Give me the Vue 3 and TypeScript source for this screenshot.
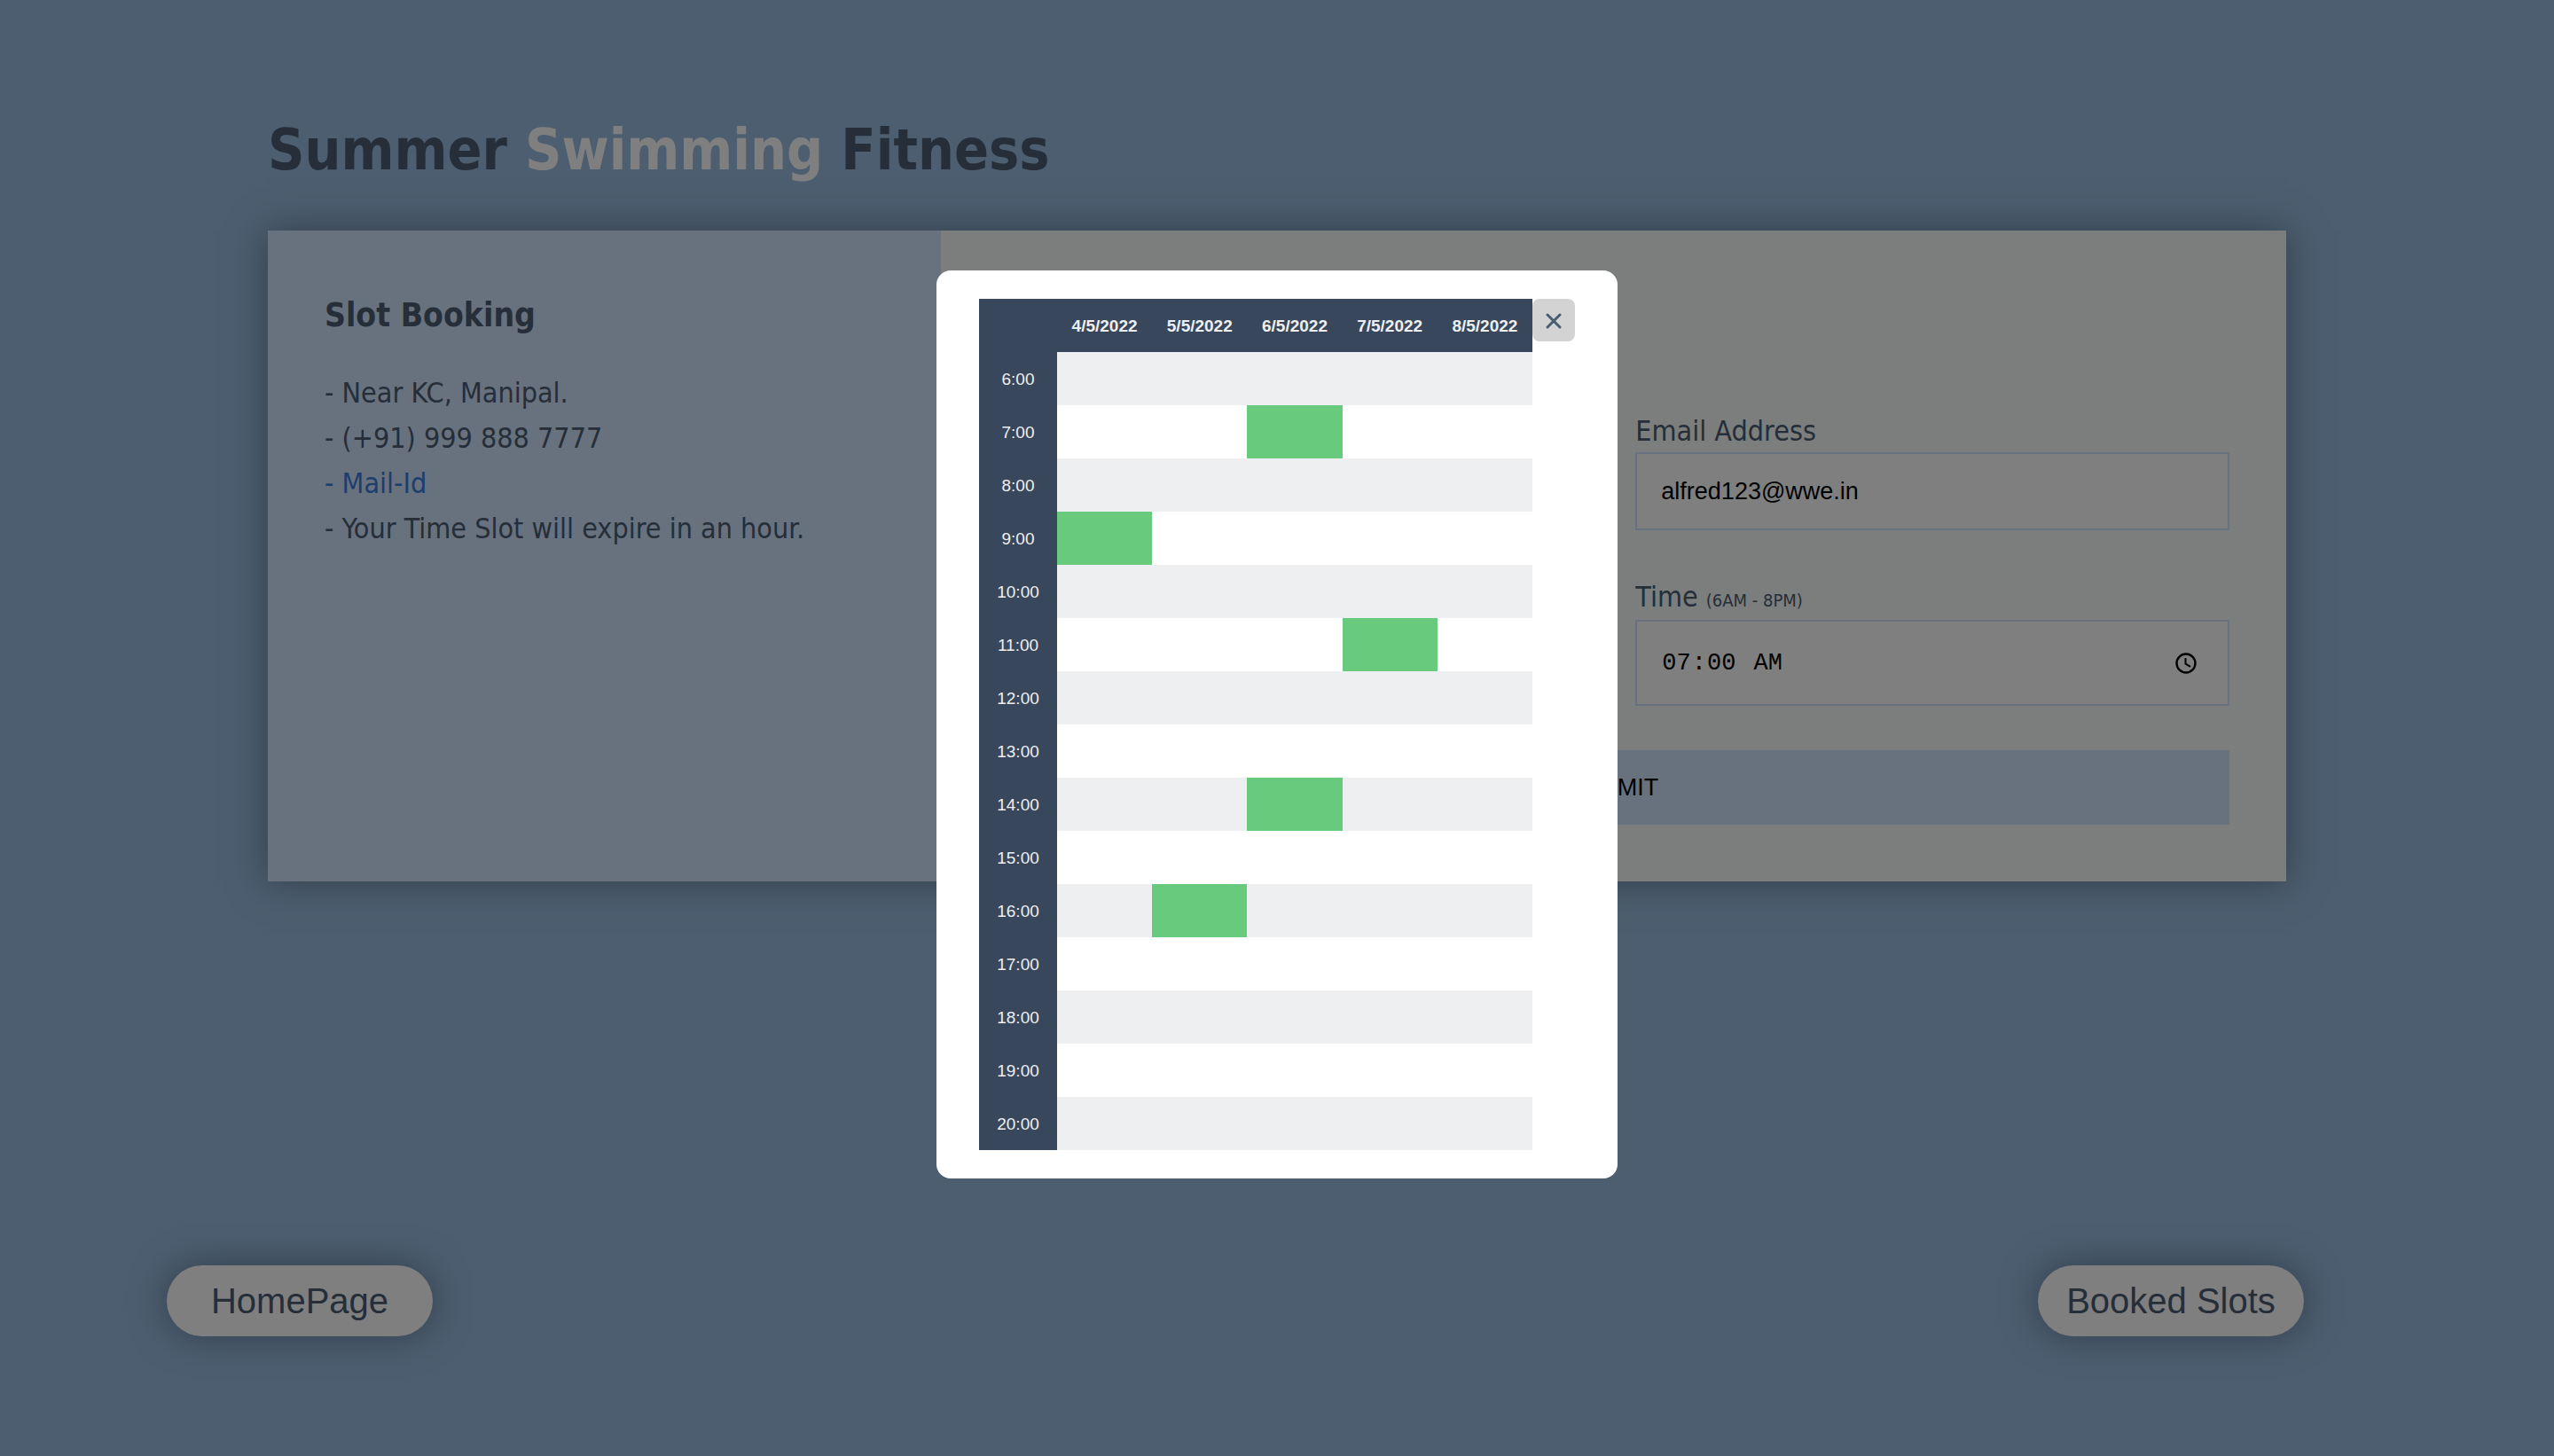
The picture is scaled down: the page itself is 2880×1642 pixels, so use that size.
<script setup lang="ts">
import { ref } from 'vue'

const days: string[] = ['4/5/2022', '5/5/2022', '6/5/2022', '7/5/2022', '8/5/2022']
const hours: string[] = Array.from({ length: 15 }, (_, i) => `${i + 6}:00`)

const booked = new Set<string>([
  '6/5/2022 7:00',
  '4/5/2022 9:00',
  '7/5/2022 11:00',
  '6/5/2022 14:00',
  '5/5/2022 16:00',
])

const email = ref('alfred123@wwe.in')
const time = ref('07:00')
const showSlots = ref(true)

const isBooked = (day: string, hour: string): boolean => booked.has(`${day} ${hour}`)
</script>

<template>
  <div class="page">
    <main class="container">
      <h1 class="brand">Summer <span>Swimming</span> Fitness</h1>

      <div class="wrapper">
        <section class="info">
          <h3>Slot Booking</h3>
          <ul>
            <li>- Near KC, Manipal.</li>
            <li>- (+91) 999 888 7777</li>
            <li><a href="#mail">- Mail-Id</a></li>
            <li>- Your Time Slot will expire in an hour.</li>
          </ul>
        </section>

        <section class="booking">
          <form @submit.prevent>
            <p class="field">
              <label for="email">Email Address</label>
              <input id="email" v-model="email" type="email" />
            </p>
            <p class="field">
              <label for="time">Time <small>(6AM - 8PM)</small></label>
              <input id="time" v-model="time" type="time" min="06:00" max="20:00" />
            </p>
            <button class="submit" type="submit">SUBMIT</button>
          </form>
        </section>
      </div>
    </main>

    <nav class="actions">
      <button type="button" class="pill">HomePage</button>
      <button type="button" class="pill" @click="showSlots = true">Booked Slots</button>
    </nav>

    <div v-if="showSlots" class="overlay">
      <div class="modal" role="dialog" aria-modal="true">
        <table>
          <thead>
            <tr>
              <th class="hour"></th>
              <th v-for="day in days" :key="day" scope="col">{{ day }}</th>
            </tr>
          </thead>
          <tbody>
            <tr v-for="hour in hours" :key="hour">
              <th class="hour" scope="row">{{ hour }}</th>
              <td v-for="day in days" :key="day" :class="{ booked: isBooked(day, hour) }"></td>
            </tr>
          </tbody>
        </table>
        <button type="button" class="close" aria-label="Close" @click="showSlots = false">
          <svg viewBox="0 0 20 20" width="20" height="20" aria-hidden="true">
            <path d="M3 4 17 18M17 4 3 18" fill="none" stroke="currentColor" stroke-width="3" stroke-linecap="round" />
          </svg>
        </button>
      </div>
    </div>
  </div>
</template>

<style>
body {
  margin: 0;
  background: #9abce0;
}
</style>

<style scoped>
* {
  box-sizing: border-box;
}

.page {
  display: flex;
  flex-direction: column;
  min-height: 100vh;
  background: #9abce0;
  color: #4a5c72;
  font-family: Tahoma, 'DejaVu Sans Condensed', 'DejaVu Sans', sans-serif;
  font-stretch: condensed;
  font-size: 32px;
  line-height: 51px;
}

.container {
  width: 100%;
  max-width: 2340px;
  margin: 0 auto;
  padding: 118px 32px 32px;
}

.brand {
  margin: 0 0 40px;
  font-size: 64px;
  line-height: 102px;
}

.brand span {
  color: #fff;
}

.wrapper {
  display: grid;
  grid-template-columns: 1fr 2fr;
  box-shadow: 0 0 40px 0 rgba(72, 94, 116, 0.7);
}

.info {
  padding: 66px 64px 64px;
  background: #d0e4fc;
}

.info h3 {
  margin: 0 0 32px;
  font-size: 37px;
  line-height: 60px;
}

.info ul {
  margin: 0;
  padding: 0;
  list-style: none;
}

.info a {
  color: #387cde;
  text-decoration: none;
}

.booking {
  padding: 201px 64px 64px;
  background: #f9fcfa;
}

form {
  display: grid;
  grid-template-columns: 1fr 1fr;
  gap: 50px;
}

.field {
  grid-column: 2;
  margin: 0;
}

label {
  display: block;
  height: 49px;
}

.field + .field label {
  height: 51px;
}

small {
  font-size: 20px;
  line-height: 20px;
}

input {
  display: block;
  width: 100%;
  margin: 0;
  padding: 27px;
  border: 2px solid #d0e4fc;
  border-radius: 0;
  background: #fff;
  color: #000;
  font: 27px/30px 'Liberation Sans', Arial, sans-serif;
}

input[type='time'] {
  height: 97px;
  font-family: 'Courier New', 'Liberation Mono', monospace;
}

input[type='time']::-webkit-datetime-edit-ampm-field {
  margin-left: 10px;
}

input[type='time']::-webkit-calendar-picker-indicator {
  width: 28px;
  height: 28px;
  margin: 0 6px 0 0;
  padding: 0;
  background: url("data:image/svg+xml,%3Csvg xmlns='http://www.w3.org/2000/svg' viewBox='0 0 28 28' fill='none' stroke='black'%3E%3Ccircle cx='14' cy='14' r='10.5' stroke-width='2.4'/%3E%3Cpath d='M13.5 8v6.6l5.5 3.3' stroke-width='2'/%3E%3C/svg%3E") center / 28px no-repeat;
}

.submit {
  grid-column: 1 / -1;
  padding: 27px;
  border: 0;
  background: #d0e4fc;
  color: #000;
  font: 27px/30px 'Liberation Sans', Arial, sans-serif;
}

.actions {
  display: flex;
  justify-content: space-between;
  margin-top: auto;
  padding: 0 282px 135px 188px;
}

.pill {
  width: 300px;
  height: 80px;
  padding: 0;
  border: 0;
  border-radius: 40px;
  background: #fff;
  box-shadow: 0 0 40px 0 rgba(72, 94, 116, 0.7);
  color: #4a5c72;
  font: 40px/46px 'Liberation Sans', Arial, sans-serif;
}

.overlay {
  position: fixed;
  inset: 0;
  display: flex;
  align-items: center;
  justify-content: center;
  padding-bottom: 8px;
  background: rgba(0, 0, 0, 0.5);
}

.modal {
  display: flex;
  align-items: flex-start;
  padding: 32px 48px;
  border-radius: 16px;
  background: #fff;
}

table {
  width: 624px;
  border-collapse: collapse;
  table-layout: fixed;
  font: 19px/22px 'Liberation Sans', Arial, sans-serif;
}

tr {
  height: 60px;
}

th,
td {
  padding: 2px 0 0;
  text-align: center;
}

th {
  background: #38475c;
  color: #eeeff1;
}

.hour {
  width: 88px;
}

tbody th {
  font-weight: 400;
}

tbody tr:nth-child(odd) {
  background: #eeeff1;
}

.booked {
  background: #67ca7c;
}

.close {
  display: grid;
  place-items: center;
  width: 48px;
  height: 48px;
  padding: 0;
  border: 0;
  border-radius: 8px;
  background: #d3d3d3;
  color: #4a5c72;
}
</style>
